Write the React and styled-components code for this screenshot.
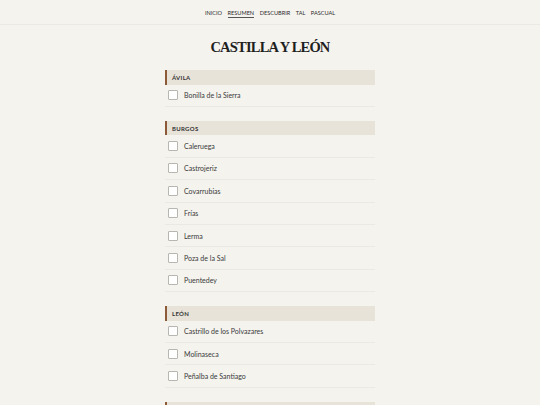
import React from "react";
import styled, { createGlobalStyle } from "styled-components";

const GlobalStyle = createGlobalStyle`
  html, body {
    margin: 0;
    padding: 0;
    background: #f4f3ee;
  }
  body {
    font-family: Lato, "Noto Sans", sans-serif;
    color: #333;
  }
`;

const regions = [
  { name: "Ávila", towns: ["Bonilla de la Sierra"] },
  {
    name: "Burgos",
    towns: [
      "Caleruega",
      "Castrojeriz",
      "Covarrubias",
      "Frías",
      "Lerma",
      "Poza de la Sal",
      "Puentedey",
    ],
  },
  {
    name: "León",
    towns: ["Castrillo de los Polvazares", "Molinaseca", "Peñalba de Santiago"],
  },
  { name: "Palencia", towns: ["Ampudia"] },
];

const navLinks = ["Inicio", "Resumen", "Descubrir", "Tal", "Pascual"];

export default function App() {
  return (
    <>
      <GlobalStyle />
      <Nav>
        {navLinks.map((link) => (
          <NavLink key={link} $active={link === "Resumen"}>
            {link}
          </NavLink>
        ))}
      </Nav>
      <Main>
        <Title>Castilla y León</Title>
        {regions.map((region) => (
          <Section key={region.name}>
            <SectionHeader>{region.name}</SectionHeader>
            {region.towns.map((town) => (
              <Row key={town}>
                <Checkbox />
                <TownName>{town}</TownName>
              </Row>
            ))}
          </Section>
        ))}
      </Main>
    </>
  );
}

const Nav = styled.nav`
  display: flex;
  justify-content: center;
  gap: 5.5px;
  height: 25px;
  align-items: center;
  border-bottom: 1px solid #ebe9e2;
  box-sizing: border-box;
  padding-top: 2px;
`;

const NavLink = styled.a`
  font-size: 5.6px;
  text-transform: uppercase;
  color: #2a2a2a;
  padding-bottom: 1px;
  border-bottom: 1px solid ${(p) => (p.$active ? "#555" : "transparent")};
  cursor: pointer;
`;

const Main = styled.main`
  width: 210px;
  margin: 0 auto;
`;

const Title = styled.h1`
  margin: 13px 0 14px;
  text-align: center;
  font-family: "Liberation Serif", serif;
  font-weight: bold;
  font-size: 14.5px;
  line-height: 18px;
  text-transform: uppercase;
  color: #1f1f1f;
  letter-spacing: -0.8px;
`;

const Section = styled.section`
  margin-bottom: 14px;
`;

const SectionHeader = styled.h2`
  margin: 0;
  height: 14.5px;
  display: flex;
  align-items: center;
  padding-left: 5px;
  background: #e8e3d9;
  border-left: 2px solid #8c5a36;
  font-size: 6px;
  font-weight: bold;
  letter-spacing: 0.3px;
  text-transform: uppercase;
  color: #333;
`;

const Row = styled.label`
  display: flex;
  align-items: center;
  gap: 6px;
  height: 22.4px;
  box-sizing: border-box;
  padding-left: 3px;
  border-bottom: 1px solid #ebe9e2;
`;

const Checkbox = styled.span`
  width: 10px;
  height: 10px;
  box-sizing: border-box;
  border: 1px solid #b8b6b0;
  border-radius: 1px;
  background: #fff;
`;

const TownName = styled.span`
  font-size: 7px;
  color: #3a3a3a;
`;
